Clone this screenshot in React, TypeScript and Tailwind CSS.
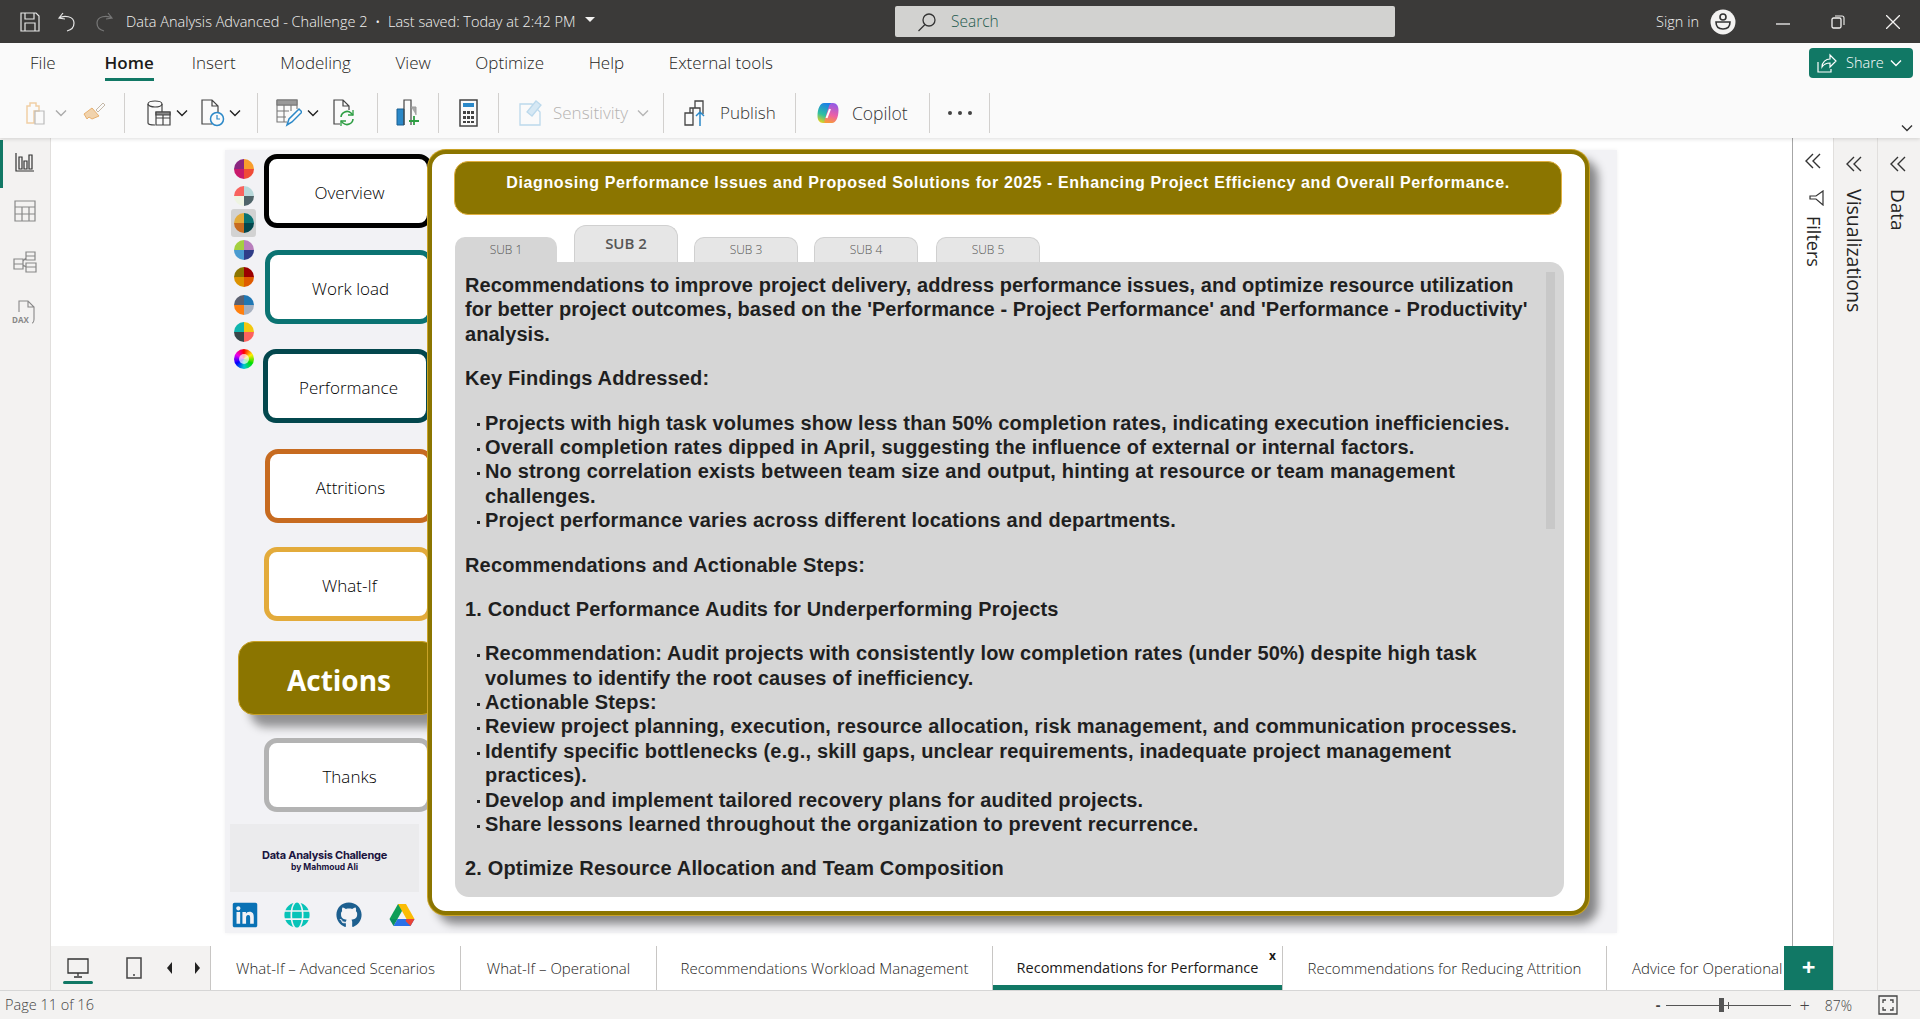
import { FaLinkedin, FaGithub, FaGlobe } from 'react-icons/fa';

const ui = "font-['Open_Sans',sans-serif]";

const ribbonTabs = ['Insert', 'Modeling', 'View', 'Optimize', 'Help', 'External tools'];

const themes = [
  ['#8a2680', '#f99e2d', '#c9196b', '#f04b37'],
  ['#f8635e', '#b8d8da', '#eef4e2', '#4f6469'],
  ['#e3ab3b', '#0b7372', '#c76b20', '#03474d'],
  ['#a4cf3f', '#b87fbc', '#4a9bd0', '#2f3d87'],
  ['#8b7500', '#9c0000', '#dc9200', '#df5b00'],
  ['#5a6070', '#1f77b4', '#ff7f0e', '#a6b0c0'],
  ['#0fb5ae', '#f2c80f', '#374649', '#fd625e'],
];

const pageTabs = [
  { label: 'What-If – Advanced Scenarios', width: 'w-[250px]' },
  { label: 'What-If – Operational', width: 'w-[196px]' },
  { label: 'Recommendations Workload Management', width: 'w-[336px]' },
];

// Quartered circle from the theme picker
function ThemeDot({ colors }: { colors: string[] }) {
  return (
    <svg width="20" height="20" viewBox="0 0 20 20">
      <path d="M10 10V0A10 10 0 0 0 0 10z" fill={colors[0]} />
      <path d="M10 10V0A10 10 0 0 1 20 10z" fill={colors[1]} />
      <path d="M10 10H0A10 10 0 0 0 10 20z" fill={colors[2]} />
      <path d="M10 10H20A10 10 0 0 1 10 20z" fill={colors[3]} />
    </svg>
  );
}

function NavButton({ label, border, offset }: { label: string; border: string; offset: string }) {
  return (
    <div
      className={`flex h-[74px] w-[168px] items-center justify-center rounded-[13px] border-[5px] bg-white pl-[3px] pt-[3px] text-[17px] font-light text-black ${border} ${offset} ${ui}`}
    >
      {label}
    </div>
  );
}

function Chevron({ className = '' }: { className?: string }) {
  return (
    <svg width="14" height="14" viewBox="0 0 14 14" fill="none" stroke="currentColor" strokeWidth="1.4" className={className}>
      <path d="M2 4.5l5 5 5-5" />
    </svg>
  );
}

function DoubleChevron() {
  return (
    <svg width="18" height="18" viewBox="0 0 18 18" fill="none" stroke="#333" strokeWidth="1.4">
      <path d="M9 2L2 9l7 7M16 2L9 9l7 7" />
    </svg>
  );
}

function Segment({ width, children }: { width: string; children: React.ReactNode }) {
  return <div className={`flex h-[40px] items-center border-r border-[#d2d0ce] ${width}`}>{children}</div>;
}

function Line({ children }: { children: React.ReactNode }) {
  return <div className="h-[24.4px] whitespace-nowrap leading-[24.4px]">{children}</div>;
}

function Bullet({ lines }: { lines: string[] }) {
  return (
    <div>
      {lines.map((text, i) => (
        <div key={text} className="flex h-[24.4px] items-center whitespace-nowrap pl-[12px] leading-[24.4px]">
          <span className={`mr-[5px] mt-[4px] h-[3px] w-[3px] bg-[#222] ${i > 0 ? 'opacity-0' : ''}`} />
          {text}
        </div>
      ))}
    </div>
  );
}

function DriveLogo() {
  return (
    <svg width="26" height="24" viewBox="0 0 26 24">
      <path d="M9 1h8l-8.5 15H0.5z" fill="#0f9d58" />
      <path d="M17 1l8.500 15h-8L9 1z" fill="#fbbc04" />
      <path d="M25.500 16l-4 7H4.500l4-7z" fill="#2a71e8" />
      <path d="M4.500 23L.5 16h8l-4 7z" fill="#0a8f60" />
      <path d="M21.500 23l4-7h-8l-1 2z" fill="#ea4335" />
    </svg>
  );
}

function CopilotLogo() {
  return (
    <svg width="24" height="24" viewBox="0 0 24 24">
      <defs>
        <linearGradient id="copA" x1="0.6" y1="0" x2="0.3" y2="1">
          <stop offset="0" stopColor="#1b7fe8" />
          <stop offset="0.6" stopColor="#2fc0a0" />
          <stop offset="1" stopColor="#e9d21c" />
        </linearGradient>
        <linearGradient id="copB" x1="0.6" y1="0" x2="0.4" y2="1">
          <stop offset="0" stopColor="#8f5be8" />
          <stop offset="0.6" stopColor="#ee5fa5" />
          <stop offset="1" stopColor="#f79a3a" />
        </linearGradient>
      </defs>
      <path d="M8 2h7c1 0 1 1 .6 2L11 19c-.8 2.500-2 3-4 3-3.500 0-5.500-3-5.500-7C1.500 8 4 2 8 2z" fill="url(#copA)" />
      <path d="M16 22H9c-1 0-1-1-.6-2L13 5c.8-2.500 2-3 4-3 3.500 0 5.500 3 5.500 7 0 7-2.500 13-6.500 13z" fill="url(#copB)" />
      <path d="M14 8l-3.500 9" stroke="#fff" strokeWidth="2" />
    </svg>
  );
}

export default function App() {
  return (
    <div className={`flex h-screen w-screen flex-col overflow-hidden bg-white ${ui}`}>
      {/* Title bar */}
      <header className="flex h-[43px] shrink-0 items-center bg-[#3b3a39] text-[#f3f2f1]">
        <svg width="20" height="20" viewBox="0 0 20 20" fill="none" stroke="#e6e6e6" strokeWidth="1.2" className="ml-[20px]">
          <path d="M1 1h15l3 3v15H1zM5 1v6h9V1M5 19v-8h10v8" />
        </svg>
        <svg width="20" height="20" viewBox="0 0 20 20" fill="none" stroke="#e6e6e6" strokeWidth="1.2" className="ml-[17px]">
          <path d="M6 1L2 6l6 1M2 6c5-3 15-2 15 5 0 4-3 7-7 8" />
        </svg>
        <svg width="20" height="20" viewBox="0 0 20 20" fill="none" stroke="#777" strokeWidth="1.2" className="ml-[17px]">
          <path d="M14 1l4 5-6 1M18 6C13 3 3 4 3 11c0 4 3 7 7 8" />
        </svg>
        <span className="ml-[12px] whitespace-nowrap text-[14.500px] font-light">Data Analysis Advanced - Challenge 2 &nbsp;•&nbsp; Last saved: Today at 2:42 PM</span>
        <span className="ml-[9px] mb-[4px] h-0 w-0 border-x-[5px] border-t-[5px] border-x-transparent border-t-[#f3f2f1]" />
        <div className="absolute left-[895px] top-[6px] flex h-[31px] w-[500px] items-center rounded-[2px] bg-[#d2d2d0] pl-[22px]">
          <svg width="20" height="20" viewBox="0 0 20 20" fill="none" stroke="#333" strokeWidth="1.3">
            <circle cx="12" cy="8" r="6" />
            <path d="M8 12.500L1.500 19" />
          </svg>
          <span className="ml-[14px] text-[15.500px] font-light text-[#1f5a4e]">Search</span>
        </div>
        <span className="ml-auto text-[14.500px] font-light">Sign in</span>
        <svg width="26" height="26" viewBox="0 0 26 26" className="ml-[11px]">
          <circle cx="13" cy="13" r="12.500" fill="#f3f2f1" />
          <circle cx="13" cy="8" r="3" fill="none" stroke="#333" strokeWidth="1.600" />
          <path d="M6 13h14c0 5-3 7-7 7s-7-2-7-7z" fill="none" stroke="#333" strokeWidth="1.600" />
        </svg>
        <svg width="14" height="14" viewBox="0 0 14 14" stroke="#f3f2f1" fill="none" className="ml-[40px]">
          <path d="M0 9h14" strokeWidth="1.300" />
        </svg>
        <svg width="14" height="14" viewBox="0 0 14 14" stroke="#f3f2f1" fill="none" className="ml-[41px]">
          <rect x="1" y="3" width="9" height="10" rx="1.500" strokeWidth="1.300" />
          <path d="M4 1h7c1.500 0 2 .500 2 2v7" strokeWidth="1.100" />
        </svg>
        <svg width="14" height="14" viewBox="0 0 14 14" stroke="#f3f2f1" fill="none" className="ml-[41px] mr-[20px]">
          <path d="M0 0l14 14M14 0L0 14" strokeWidth="1.300" />
        </svg>
      </header>

      {/* Ribbon */}
      <section className="relative z-20 h-[95px] shrink-0 bg-[#fafafa] shadow-[0_1px_4px_rgba(0,0,0,0.14)]">
        <nav className="mb-[10px] flex h-[40px] items-center text-[17px] font-light text-[#252423]">
          <span className="ml-[30px] mr-[49px]">File</span>
          <span className="relative mr-[38px] font-semibold text-[#1b1a19]">
            Home
            <span className="absolute -bottom-[5px] left-0 h-[3px] w-full bg-[#117865]" />
          </span>
          <div className="flex gap-[44.600px]">
            {ribbonTabs.map((tab) => (
              <span key={tab}>{tab}</span>
            ))}
          </div>
          <button className="ml-auto mr-[7px] flex h-[30px] w-[104px] items-center rounded-[4px] bg-[#117865] pl-[8px] text-[14.500px] font-light text-white">
            <svg width="20" height="20" viewBox="0 0 20 20" fill="none" stroke="#fff" strokeWidth="1.200">
              <path d="M1 9v10h13v-3M5 14c0-5 4-8 8-8V2l6 6-6 6v-4c-4 0-6 1-8 4z" />
            </svg>
            <span className="ml-[9px]">Share</span>
            <Chevron className="ml-[5px]" />
          </button>
        </nav>
        <div className="flex items-center text-[#333]">
          <Segment width="w-[125px]">
            <svg width="24" height="24" viewBox="0 0 24 24" fill="none" className="ml-[24px]">
              <path d="M3 5h3V2h6v3h3v5H10v12H3z" stroke="#f1cfa5" strokeWidth="1.500" />
              <path d="M11 10h9v13h-9z" stroke="#bbb" strokeWidth="1.200" />
            </svg>
            <Chevron className="ml-[6px] text-[#aaa]" />
            <svg width="24" height="24" viewBox="0 0 24 24" fill="none" className="ml-[14px]">
              <path d="M2 13l8-6 7 8-7 3-3-2-2 2z" fill="#f1d3ad" stroke="#e7b06f" />
              <path d="M14 9l7-7 2 2-7 7z" stroke="#c4b8a8" />
            </svg>
          </Segment>
          <Segment width="w-[133px]">
            <svg width="24" height="28" viewBox="0 0 24 28" fill="none" stroke="#444" strokeWidth="1.200" className="ml-[22px]">
              <ellipse cx="8" cy="5" rx="7" ry="3" />
              <path d="M1 5v19c0 1.500 3 2 7 2M15 5v8" />
              <path d="M9 13h14v13H9zM9 19h14M16 13v13" />
              <path d="M9 13h14v3H9z" fill="#888" />
            </svg>
            <Chevron className="ml-[4px] text-[#222]" />
            <svg width="26" height="28" viewBox="0 0 26 28" fill="none" stroke="#444" strokeWidth="1.200" className="ml-[11px]">
              <path d="M12 25H2V1h10l6 6v6M12 1v6h6" />
              <circle cx="17" cy="20" r="6.500" stroke="#2b88c8" strokeWidth="1.500" />
              <path d="M17 16v4h3" stroke="#2b88c8" />
            </svg>
            <Chevron className="ml-[2px] text-[#222]" />
          </Segment>
          <Segment width="w-[120px]">
            <svg width="26" height="28" viewBox="0 0 26 28" fill="none" stroke="#777" strokeWidth="1.100" className="ml-[18px]">
              <path d="M1 1h20v9M1 1v22h10M1 6h20M1 12h12M1 18h9M8 6v17M15 6v6" />
              <path d="M1 1h20v5H1z" fill="#999" />
              <path d="M11 26l2-6 10-10 3 3-10 10z" stroke="#2b88c8" strokeWidth="1.500" />
            </svg>
            <Chevron className="ml-[4px] text-[#222]" />
            <svg width="24" height="28" viewBox="0 0 24 28" fill="none" strokeWidth="1.200" className="ml-[12px]">
              <path d="M8 25H2V1h9l6 6v4M11 1v6h6" stroke="#444" />
              <path d="M9 18a6 6 0 0 1 10-4l2 2M21 20a6 6 0 0 1-10 4l-2-2" stroke="#2f9e44" strokeWidth="1.600" />
              <path d="M21 11v5h-5M9 27v-5h5" stroke="#2f9e44" strokeWidth="1.300" />
            </svg>
          </Segment>
          <Segment width="w-[61px]">
            <svg width="24" height="28" viewBox="0 0 24 28" fill="none" className="ml-[18px]">
              <path d="M1 10h7v16H1z" fill="#2b88c8" stroke="#1a5f90" />
              <path d="M8 26V1h7v25" stroke="#444" strokeWidth="1.200" />
              <path d="M15 8h5v8" fill="#aaa" stroke="#999" />
              <path d="M18 17v9M13 22h10" stroke="#2f9e44" strokeWidth="1.800" />
            </svg>
          </Segment>
          <Segment width="w-[60px]">
            <svg width="20" height="28" viewBox="0 0 20 28" fill="none" className="ml-[20px]">
              <rect x="1" y="1" width="17" height="26" stroke="#444" strokeWidth="1.500" />
              <rect x="4" y="4" width="11" height="4" fill="#2b88c8" />
              <path d="M4 12h3v3H4zM8 12h3v3H8zM12 12h3v3h-3zM4 17h3v3H4zM8 17h3v3H8zM12 17h3v3h-3zM4 22h3v2H4zM8 22h3v2H8zM12 22h3v2h-3z" fill="#444" />
            </svg>
          </Segment>
          <Segment width="w-[165px]">
            <svg width="24" height="28" viewBox="0 0 24 28" fill="none" stroke="#bcd9ec" strokeWidth="1.300" className="ml-[20px]">
              <path d="M1 5h12l8 8v13H1z" />
              <path d="M8 13l9-11 5 4-9 11z" fill="#d6e8f4" />
            </svg>
            <span className="ml-[10px] text-[17px] font-light text-[#b5b3b1]">Sensitivity</span>
            <Chevron className="ml-[8px] text-[#b5b5b5]" />
          </Segment>
          <Segment width="w-[132px]">
            <svg width="24" height="28" viewBox="0 0 24 28" fill="none" stroke="#444" strokeWidth="1.300" className="ml-[20px]">
              <path d="M1 14h8v12H1zM9 26V9h6l1 0v5M6 14V9h3M11 9V2h8v13" />
              <path d="M16 27V13M12 17l4-4 4 4" stroke="#2b88c8" strokeWidth="1.500" />
            </svg>
            <span className="ml-[12px] text-[17px] font-light">Publish</span>
          </Segment>
          <Segment width="w-[134px]">
            <span className="ml-[20px]">
              <CopilotLogo />
            </span>
            <span className="ml-[12px] text-[17.500px] font-light">Copilot</span>
          </Segment>
          <Segment width="w-[60px]">
            <div className="ml-[18px] flex gap-[6px]">
              <span className="h-[4px] w-[4px] rounded-full bg-[#444]" />
              <span className="h-[4px] w-[4px] rounded-full bg-[#444]" />
              <span className="h-[4px] w-[4px] rounded-full bg-[#444]" />
            </div>
          </Segment>
        </div>
        <Chevron className="absolute bottom-[3px] right-[6px] text-[#333]" />
      </section>

      {/* Body */}
      <div className="flex min-h-0 flex-1">
        {/* Left rail */}
        <aside className="relative flex w-[51px] shrink-0 flex-col items-center border-r border-[#e1dfdd] bg-[#f3f2f1]">
          <span className="absolute left-0 top-[2px] h-[48px] w-[3px] bg-[#117865]" />
          <svg width="20" height="20" viewBox="0 0 20 20" fill="none" stroke="#333" strokeWidth="1.200" className="mt-[14px]">
            <path d="M1 1v18h18M4 5h3v12H4zM9 9h3v8H9zM14 3h3v14h-3z" />
          </svg>
          <svg width="22" height="22" viewBox="0 0 22 22" fill="none" stroke="#888" strokeWidth="1.200" className="mt-[28px]">
            <path d="M1 1h20v20H1zM1 7h20M1 14h20M8 7v14M15 7v14" />
          </svg>
          <svg width="24" height="24" viewBox="0 0 24 24" fill="none" stroke="#888" strokeWidth="1.200" className="mt-[28px]">
            <path d="M1 9h9v10H1zM1 14h9M13 2h9v8h-9zM13 6h9M13 13h10v9H13zM13 17h10M10 11l3-3M10 15l3 2" />
          </svg>
          <div className="relative mt-[26px] h-[24px] w-[24px]">
            <svg width="24" height="24" viewBox="0 0 24 24" fill="none" stroke="#888" strokeWidth="1.100">
              <path d="M6 12V1h9l6 6v12c0 2-1 4-2 4M15 1v6h6" />
            </svg>
            <span className="absolute bottom-[0px] left-[-1px] text-[8px] font-bold leading-none text-[#888]">DAX</span>
          </div>
        </aside>

        <div className="flex min-w-0 flex-1 flex-col">
          <div className="flex min-h-0 flex-1">
            {/* Report canvas */}
            <main className="relative min-w-0 flex-1 overflow-hidden bg-white pl-[174px] pt-[12px]">
              <div className="flex h-[783px] w-[1392px] bg-[#f2f2f5] shadow-[0_0_4px_rgba(0,0,0,0.06)]">
                <div className="w-[203px] shrink-0 pt-[4px]">
                  <div className="flex">
                    <div className="ml-[6px] mt-[1px] flex w-[25px] shrink-0 flex-col">
                      {themes.map((colors, i) => (
                        <div
                          key={colors[0]}
                          className={`flex h-[27.200px] items-center justify-center rounded-[3px] ${i === 2 ? 'bg-[#d2d2d2]' : ''}`}
                        >
                          <ThemeDot colors={colors} />
                        </div>
                      ))}
                      <div className="flex h-[27.200px] items-center justify-center">
                        <div className="h-[20px] w-[20px] rounded-full bg-[conic-gradient(#ff0000,#ffee00,#00dd00,#00cccc,#0000ff,#ee00ee,#ff0000)] p-[5px]">
                          <div className="h-full w-full rounded-full bg-white/70" />
                        </div>
                      </div>
                    </div>
                    <div className="ml-[8px] flex flex-col">
                      <NavButton label="Overview" border="border-black" offset="" />
                      <NavButton label="Work load" border="border-[#0b7372]" offset="ml-[1px] mt-[22px]" />
                      <NavButton label="Performance" border="border-[#03474d]" offset="-ml-[1px] mt-[25px]" />
                    </div>
                  </div>
                  <NavButton label="Attritions" border="border-[#c76b20]" offset="ml-[40px] mt-[26px]" />
                  <NavButton label="What-If" border="border-[#e3ab3b]" offset="ml-[39px] mt-[24px]" />
                  <div className="ml-[13px] mt-[20px] flex h-[74px] w-[200px] items-center justify-center rounded-[16px] border border-[#c9a227] bg-[#8b7500] pl-[2px] pt-[4px] text-[28px] font-bold text-white shadow-[12px_12px_10px_rgba(0,0,0,0.4)]">
                    Actions
                  </div>
                  <NavButton label="Thanks" border="border-[#b3b3b3]" offset="ml-[39px] mt-[23px]" />
                  <div className="ml-[5px] mt-[12px] flex h-[68px] w-[189px] flex-col items-center justify-center bg-[#ebebed] pt-[5px] font-['Inter',sans-serif] font-bold leading-none text-[#1a1440]">
                    <span className="text-[11px] tracking-[-0.25px]">Data Analysis Challenge</span>
                    <span className="mt-[2px] text-[8.500px]">by Mahmoud Ali</span>
                  </div>
                  <div className="ml-[7px] mt-[9px] flex items-center">
                    <FaLinkedin size={28} color="#0a72b5" className="-ml-[1px]" />
                    <FaGlobe size={26} color="#08c3b8" className="ml-[25px]" />
                    <FaGithub size={26} color="#1d5f8f" className="ml-[26px]" />
                    <span className="ml-[27px]">
                      <DriveLogo />
                    </span>
                  </div>
                </div>

                {/* Main panel */}
                <div className="relative z-10 h-[765px] w-[1161px] shrink-0 rounded-[18px] border-[4px] border-[#8b7500] bg-white pl-[23px] pt-[7px] shadow-[0_0_0_1px_#c9a227,9px_9px_10px_rgba(0,0,0,0.45)] font-['Liberation_Sans',Arial,sans-serif]">
                  <div className="-ml-[1px] h-[54px] w-[1108px] rounded-[14px] border border-[#e0b040] bg-[#8b7500] pt-[10px] text-center text-[16px] font-bold leading-[22px] tracking-[0.62px] text-white">
                    Diagnosing Performance Issues and Proposed Solutions for 2025 - Enhancing Project Efficiency and Overall Performance.
                  </div>
                  <div className="mt-[10px] flex h-[37px] items-end font-['Open_Sans',sans-serif] text-[12px] font-light text-[#555]">
                    <div className="flex h-[25px] w-[102px] items-center justify-center rounded-t-[10px] bg-[#d6d6d6]">SUB 1</div>
                    <div className="ml-[17px] flex h-[37px] w-[104px] items-start justify-center rounded-t-[12px] border border-b-0 border-[#d0d0d0] bg-[#e6e6e6] pt-[6px] text-[15px] font-semibold text-[#555]">
                      SUB 2
                    </div>
                    <div className="ml-[16px] flex h-[25px] w-[104px] items-center justify-center rounded-t-[10px] border border-b-0 border-[#d0d0d0] bg-[#e6e6e6]">SUB 3</div>
                    <div className="ml-[16px] flex h-[25px] w-[104px] items-center justify-center rounded-t-[10px] border border-b-0 border-[#d0d0d0] bg-[#e6e6e6]">SUB 4</div>
                    <div className="ml-[18px] flex h-[25px] w-[104px] items-center justify-center rounded-t-[10px] border border-b-0 border-[#d0d0d0] bg-[#e6e6e6]">SUB 5</div>
                  </div>
                  <div className="relative flex h-[635px] w-[1109px] flex-col gap-[20px] overflow-hidden rounded-b-[14px] rounded-tr-[14px] bg-[#d6d6d6] pl-[10px] pt-[11px] text-[20px] font-bold tracking-[0.17px] text-[#1f1f1f]">
                    <span className="absolute right-[9px] top-[10px] h-[257px] w-[9px] bg-[#c8c8c8]" />
                    <div className="tracking-[0.05px]">
                      <Line>Recommendations to improve project delivery, address performance issues, and optimize resource utilization</Line>
                      <Line>for better project outcomes, based on the 'Performance - Project Performance' and 'Performance - Productivity'</Line>
                      <Line>analysis.</Line>
                    </div>
                    <Line>Key Findings Addressed:</Line>
                    <div>
                      <Bullet lines={['Projects with high task volumes show less than 50% completion rates, indicating execution inefficiencies.']} />
                      <Bullet lines={['Overall completion rates dipped in April, suggesting the influence of external or internal factors.']} />
                      <Bullet lines={['No strong correlation exists between team size and output, hinting at resource or team management', 'challenges.']} />
                      <Bullet lines={['Project performance varies across different locations and departments.']} />
                    </div>
                    <Line>Recommendations and Actionable Steps:</Line>
                    <Line>1. Conduct Performance Audits for Underperforming Projects</Line>
                    <div>
                      <Bullet lines={['Recommendation: Audit projects with consistently low completion rates (under 50%) despite high task', 'volumes to identify the root causes of inefficiency.']} />
                      <Bullet lines={['Actionable Steps:']} />
                      <Bullet lines={['Review project planning, execution, resource allocation, risk management, and communication processes.']} />
                      <Bullet lines={['Identify specific bottlenecks (e.g., skill gaps, unclear requirements, inadequate project management', 'practices).']} />
                      <Bullet lines={['Develop and implement tailored recovery plans for audited projects.']} />
                      <Bullet lines={['Share lessons learned throughout the organization to prevent recurrence.']} />
                    </div>
                    <Line>2. Optimize Resource Allocation and Team Composition</Line>
                  </div>
                </div>
              </div>
            </main>

            {/* Filters pane */}
            <aside className="flex w-[41px] shrink-0 flex-col items-center border-l border-[#a6a6a6] bg-white pt-[14px] text-[18px] text-[#252423]">
              <DoubleChevron />
              <svg width="16" height="16" viewBox="0 0 16 16" fill="none" stroke="#333" strokeWidth="1.200" className="ml-[6px] mt-[20px]">
                <path d="M15 1L8 6H2v3h6l7 6z" />
              </svg>
              <span className="mt-[10px] [writing-mode:vertical-rl]">Filters</span>
            </aside>
          </div>

          {/* Page tabs */}
          <div className="z-10 flex h-[44px] shrink-0 bg-white text-[15px] font-light text-[#252423]">
            <div className="flex w-[159px] shrink-0 items-center bg-[#f3f2f1]">
              <div className="relative ml-[12px] flex h-full w-[30px] items-center justify-center">
                <svg width="22" height="22" viewBox="0 0 22 22" fill="none" stroke="#333" strokeWidth="1.300">
                  <path d="M1 2h20v14H1zM11 16v3M7 20h8" />
                </svg>
                <span className="absolute bottom-[6px] h-[3px] w-[30px] rounded-full bg-[#117865]" />
              </div>
              <svg width="16" height="22" viewBox="0 0 16 22" fill="none" stroke="#444" strokeWidth="1.500" className="ml-[33px]">
                <path d="M1 1h14v20H1zM7 18h2" />
              </svg>
              <span className="ml-[25px] h-0 w-0 border-y-[6px] border-r-[5px] border-y-transparent border-r-[#222]" />
              <span className="ml-[23px] h-0 w-0 border-y-[6px] border-l-[5px] border-y-transparent border-l-[#222]" />
            </div>
            {pageTabs.map((tab) => (
              <div key={tab.label} className={`flex shrink-0 items-center justify-center border-l border-[#c8c6c4] whitespace-nowrap ${tab.width}`}>
                {tab.label}
              </div>
            ))}
            <div className="relative flex w-[291px] shrink-0 items-center justify-center border-x border-[#c8c6c4] text-[14.500px] font-medium text-[#1b1a19]">
              Recommendations for Performance
              <span className="absolute right-[6px] top-[4px] text-[12px] font-bold leading-none">x</span>
              <span className="absolute bottom-0 left-0 h-[5px] w-full bg-[#117865]" />
            </div>
            <div className="flex w-[324px] shrink-0 items-center justify-center border-r border-[#c8c6c4] whitespace-nowrap">
              Recommendations for Reducing Attrition
            </div>
            <div className="flex min-w-0 flex-1 items-center whitespace-nowrap pl-[25px]">Advice for Operational</div>
            <div className="flex w-[49px] shrink-0 items-center justify-center bg-[#117865] pb-[3px] text-[24px] font-bold leading-none text-white">+</div>
          </div>
        </div>

        {/* Visualizations and Data panes */}
        <aside className="flex w-[44px] shrink-0 flex-col items-center border-l border-[#e1dfdd] bg-[#f3f2f1] pr-[3px] pt-[17px] text-[19.500px] text-[#252423]">
          <DoubleChevron />
          <span className="mt-[16px] [writing-mode:vertical-rl]">Visualizations</span>
        </aside>
        <aside className="flex w-[43px] shrink-0 flex-col items-center border-l border-[#e1dfdd] bg-[#f3f2f1] pr-[3px] pt-[17px] text-[19px] text-[#252423]">
          <DoubleChevron />
          <span className="mt-[16px] [writing-mode:vertical-rl]">Data</span>
        </aside>
      </div>

      {/* Status bar */}
      <footer className="flex h-[29px] shrink-0 items-center border-t border-[#d6d6d6] bg-[#f3f2f1] text-[14.500px] font-light text-[#444]">
        <span className="ml-[5px]">Page 11 of 16</span>
        <span className="ml-auto font-bold">-</span>
        <div className="relative ml-[6px] h-[1px] w-[125px] bg-[#555]">
          <span className="absolute -top-[7px] left-[53px] h-[14px] w-[5px] bg-[#555]" />
          <span className="absolute -top-[3px] left-[62px] h-[7px] w-[1px] bg-[#555]" />
        </div>
        <span className="ml-[8px] text-[18px] leading-none">+</span>
        <span className="ml-[15px] text-[14px]">87%</span>
        <svg width="20" height="20" viewBox="0 0 20 20" fill="none" stroke="#444" strokeWidth="1.300" className="ml-[26px] mr-[22px]">
          <path d="M1 1h18v18H1zM5 8V5h3M12 5h3v3M15 12v3h-3M8 15H5v-3" />
        </svg>
      </footer>
    </div>
  );
}
